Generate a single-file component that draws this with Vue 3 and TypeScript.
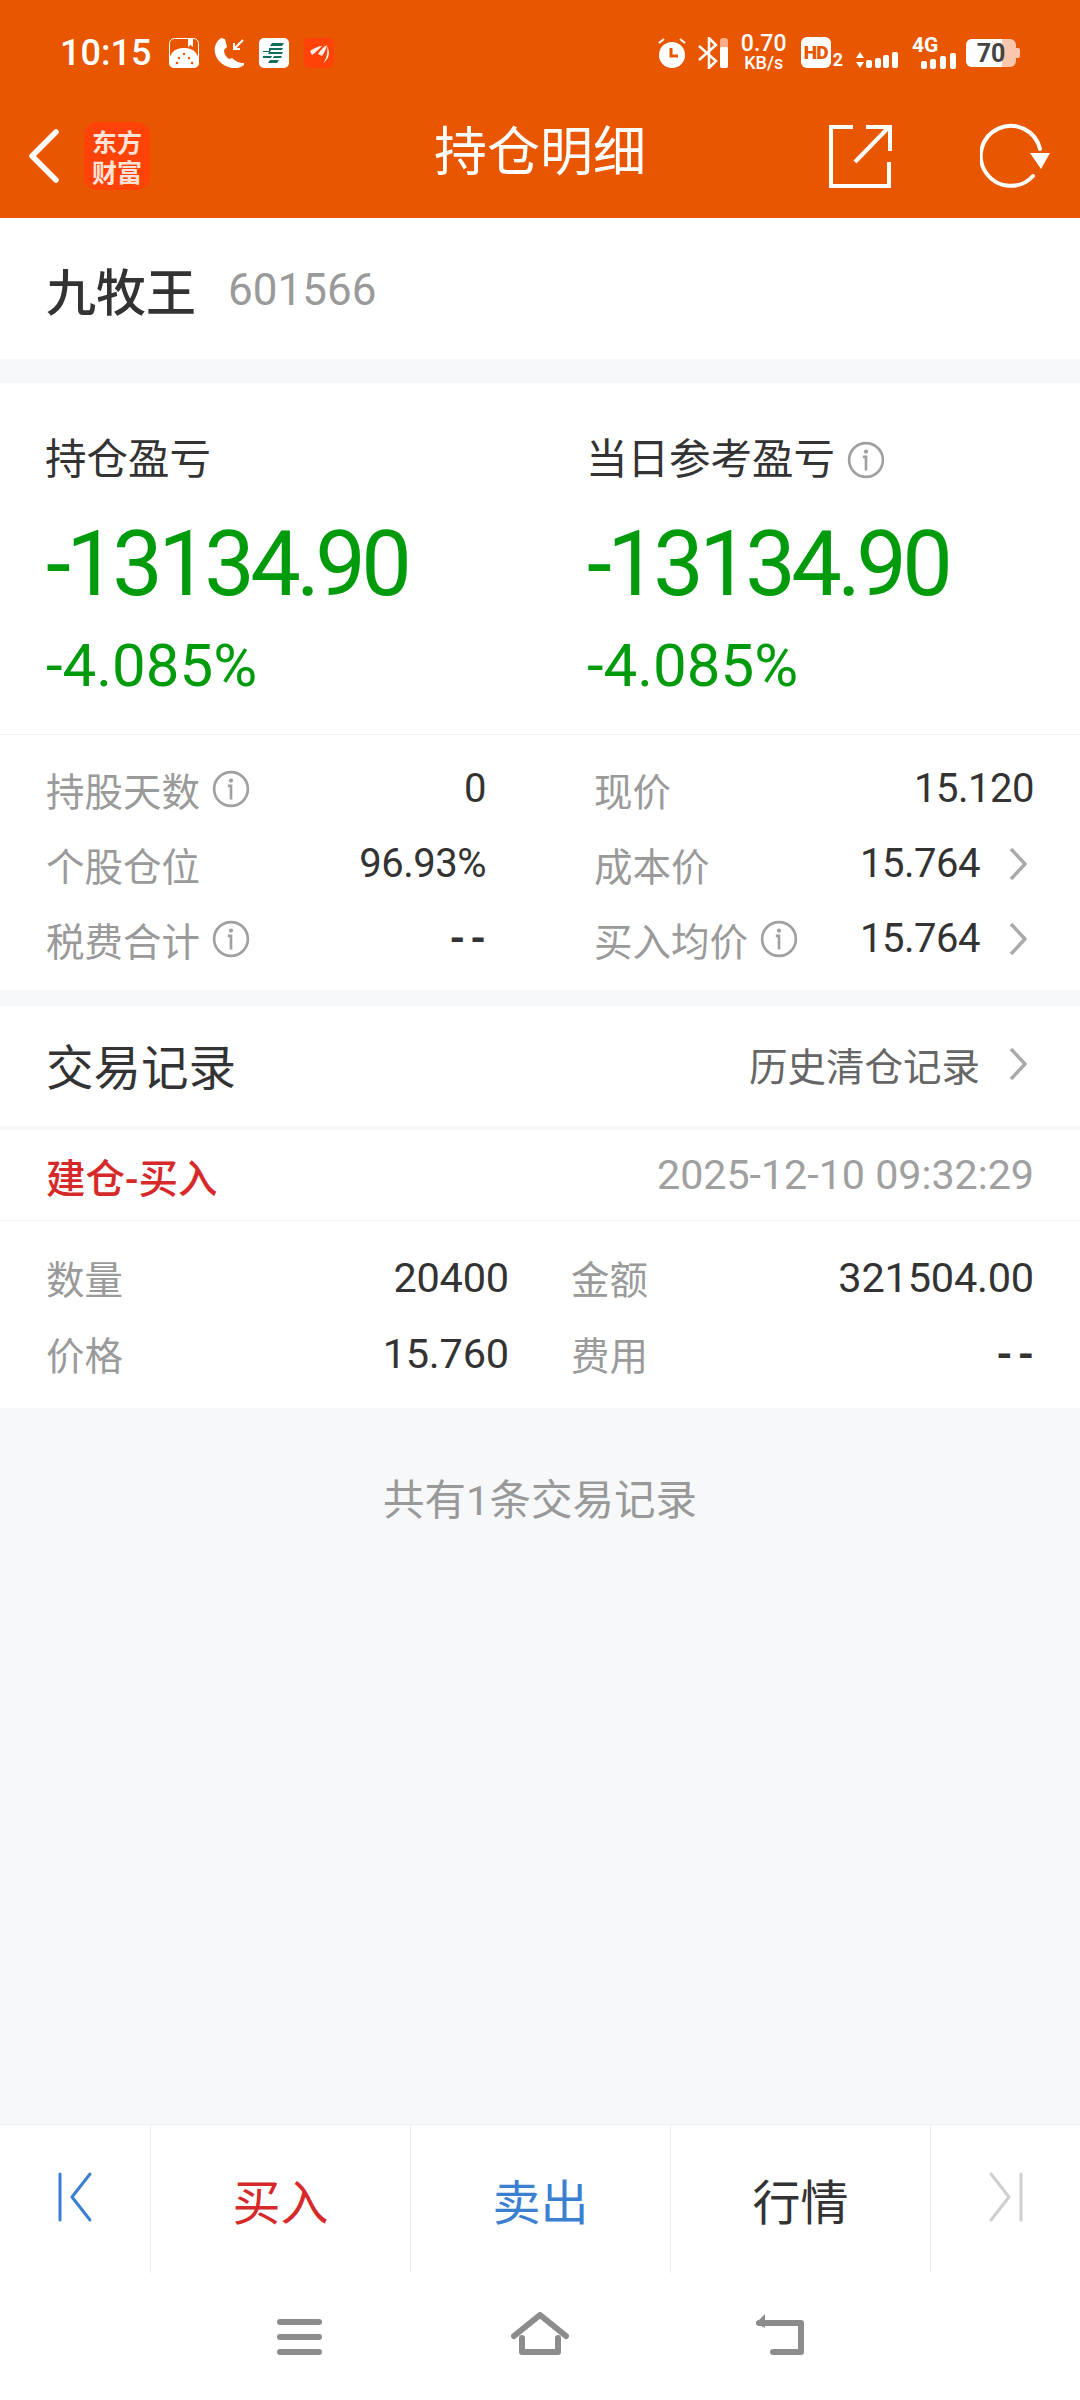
<template>
  <div class="page">
    <header class="top">
      <div class="status">
        <span class="time">10:15</span>
        <svg class="ic18" viewBox="0 0 30 30"><rect x=".5" y=".5" width="29" height="29" rx="5" fill="none" stroke="#fff" stroke-width="1" /><path d="M0 22C2 12 9 10 15 10s13 2 15 12v3a5 5 0 0 1-5 5H5a5 5 0 0 1-5-5Z" fill="#fff" /><path d="M19 0h5v9l-2.500-2-2.500 2Z" fill="#fff" /><circle cx="8" cy="25" r="1.300" fill="#e85600" /><circle cx="10" cy="20" r="1.200" fill="#e85600" /><circle cx="15" cy="16" r="1.200" fill="#e85600" /><circle cx="20" cy="20" r="1.200" fill="#e85600" /><circle cx="23" cy="25" r="1.300" fill="#e85600" /></svg>
        <svg class="ic18" viewBox="0 0 30 30"><path d="M7 0C0 5-2 14 5 23c6 7 18 10 25 4v-2c-5 0-9-2-12-5l-3 1c-3-2-5-5-5-9l3-3L11 1Z" fill="#fff" /><path d="M29 2 20 11M20 5v6h6" fill="none" stroke="#fff" stroke-width="2" /></svg>
        <svg class="ic18" viewBox="0 0 30 30"><rect width="30" height="30" rx="5" fill="#fff" /><path d="M13 5h12l-2 3H11ZM10 10h14l-1 2H12l-1 2h13l-1 2H9l1-2H4v-1h6ZM4 18h9l-1 2H4ZM15 18h8l-1 2h-8ZM11 22h9l-2 3H9Z" fill="#11705a" /></svg>
        <svg class="ic18" viewBox="0 0 30 30"><rect width="30" height="30" rx="5" fill="#ff4208" /><path d="M6 13c4-3 9-5 12-5-3 3-7 7-10 9ZM14 16c2-3 5-7 9-9-1 4-3 9-5 11ZM19 25c4-4 5-12 4-17 3 5 3 13-4 17Z" fill="#fff" opacity=".92" /></svg>
        <span class="spacer"></span>
        <svg class="sb alarm" viewBox="0 0 28 30"><path d="M1 5 6 1M27 5l-5-4" stroke="#fff" stroke-width="2" /><circle cx="14" cy="17" r="13" fill="#fff" /><path d="M13 10v8h7" fill="none" stroke="#e85600" stroke-width="3" /></svg>
        <svg class="sb bt" viewBox="0 0 32 32"><path d="M2 9l17 15-7 7V1l7 7L2 23" fill="none" stroke="#fff" stroke-width="2.500" /><rect x="23" y="1" width="8" height="30" rx="3" fill="#f9ad8a" /><rect x="23" y="10" width="8" height="21" rx="2" fill="#fff" /></svg>
        <div class="speed"><span>0.70</span><span class="unit">KB/s</span></div>
        <div class="hd"><span class="hdbox">HD</span><span class="two">2</span></div>
        <svg class="signal" viewBox="0 0 43 16"><path d="M5 0l4 6H1ZM5 16l4-6H1Z" fill="#fff" /><rect x="11" y="8" width="6" height="8" rx="2" fill="#fff" /><rect x="20" y="6" width="6" height="10" rx="2" fill="#fff" /><rect x="28" y="3" width="6" height="13" rx="2" fill="#fff" /><rect x="37" y="0" width="6" height="16" rx="2" fill="#fff" /></svg>
        <div class="g4"><span>4G</span><svg viewBox="0 0 35 16"><rect x="0" y="8" width="6" height="8" rx="2" fill="#fff" /><rect x="9" y="6" width="6" height="10" rx="2" fill="#fff" /><rect x="19" y="3" width="6" height="13" rx="2" fill="#fff" /><rect x="29" y="0" width="6" height="16" rx="2" fill="#fff" /></svg></div>
        <div class="battery"><span class="fill"></span><span class="pct">70</span><i></i></div>
      </div>
      <div class="bar">
        <div class="bar-left">
          <svg class="back" viewBox="0 0 34 56"><path d="M30 4 6 28l24 24" fill="none" stroke="#fff" stroke-width="5.500" stroke-linecap="round" stroke-linejoin="round" /></svg>
          <div class="logo"><span>东方</span><span>财富</span></div>
        </div>
        <h1 class="title">持仓明细</h1>
        <div class="bar-right">
          <svg class="share" viewBox="0 0 64 64"><path d="M25 3H3v59h58V38M38 3h24v24M60 4 27 38" fill="none" stroke="#fff" stroke-width="4" /></svg>
          <svg class="refresh" viewBox="0 0 70 66"><path d="M53 53A30 30 0 1 1 60 26" fill="none" stroke="#fff" stroke-width="4" stroke-linecap="round" /><path d="M50 30h20l-9 16Z" fill="#fff" /></svg>
        </div>
      </div>
    </header>

    <div class="stock"><strong>九牧王</strong><span>601566</span></div>

    <section class="summary">
      <div class="pl-grid">
        <div v-for="p in profit" :key="p.label" class="pl">
          <div class="pl-label">{{ p.label }}<svg v-if="p.info" class="info" viewBox="0 0 36 36"><use href="#info-mark" /></svg></div>
          <div class="pl-value">{{ p.value }}</div>
          <div class="pl-rate">{{ p.rate }}</div>
        </div>
      </div>
      <div class="stats">
        <div class="stat-col left">
          <div v-for="s in leftStats" :key="s.label" class="stat">
            <span class="k">{{ s.label }}<svg v-if="s.info" class="info" viewBox="0 0 36 36"><use href="#info-mark" /></svg></span>
            <span class="v" :class="{ dash: s.value === '--' }">{{ s.value }}</span>
          </div>
        </div>
        <div class="stat-col right">
          <div v-for="s in rightStats" :key="s.label" class="stat">
            <span class="k">{{ s.label }}<svg v-if="s.info" class="info" viewBox="0 0 36 36"><use href="#info-mark" /></svg></span>
            <span class="v">{{ s.value }}<svg v-if="s.arrow" class="chev" viewBox="0 0 20 34"><path d="M3 2l14 15L3 32" fill="none" stroke="#aaa" stroke-width="3.500" stroke-linejoin="round" /></svg></span>
          </div>
        </div>
      </div>
    </section>

    <section class="records">
      <div class="rec-head">
        <h2>交易记录</h2>
        <span class="history">历史清仓记录<svg class="chev" viewBox="0 0 20 34"><path d="M3 2l14 15L3 32" fill="none" stroke="#aaa" stroke-width="3.500" stroke-linejoin="round" /></svg></span>
      </div>
      <div class="rec-title"><span class="kind">建仓-买入</span><span class="when">2025-12-10 09:32:29</span></div>
      <div class="rec-body">
        <div v-for="r in recRows" :key="r[0]" class="rec-row">
          <span class="k">{{ r[0] }}</span><span class="v num">{{ r[1] }}</span>
          <span class="k c2">{{ r[2] }}</span><span class="v num" :class="{ dash: r[3] === '--' }">{{ r[3] }}</span>
        </div>
      </div>
    </section>

    <main class="rest">共有1条交易记录</main>

    <nav class="actions">
      <div class="act edge first-act"><svg class="skip" viewBox="0 0 36 52"><path d="M3 3v46M33 3 15 26l18 23" fill="none" stroke="#3b80d0" stroke-width="3" stroke-linecap="round" stroke-linejoin="round" /></svg></div>
      <div class="act buy">买入</div>
      <div class="act sell">卖出</div>
      <div class="act market">行情</div>
      <div class="act edge"><svg class="skip" viewBox="0 0 36 52"><path d="M33 3v46M3 3l18 23L3 49" fill="none" stroke="#cfcfcf" stroke-width="3" stroke-linecap="round" stroke-linejoin="round" /></svg></div>
    </nav>

    <footer class="nav">
      <svg viewBox="0 0 45 36" class="n1"><path d="M3 3h39M3 18h39M3 33h39" stroke="#8c8c8c" stroke-width="6" stroke-linecap="round" /></svg>
      <svg viewBox="0 0 58 43" class="n2"><path d="M3 24 29 3l26 21M11 26v14h36V26" fill="none" stroke="#8c8c8c" stroke-width="6" stroke-linejoin="round" stroke-linecap="round" /></svg>
      <svg viewBox="0 0 49 42" class="n3"><path d="M4 10h42v29H18" fill="none" stroke="#8c8c8c" stroke-width="6" stroke-linecap="round" stroke-linejoin="round" /><path d="M1 10 10 1v14Z" fill="#8c8c8c" /></svg>
    </footer>

    <svg width="0" height="0" class="defs"><defs><g id="info-mark"><circle cx="18" cy="18" r="16" fill="none" stroke="#a0a0a0" stroke-width="2.500" /><circle cx="18" cy="10" r="2" fill="#a0a0a0" /><path d="M15 15h3v13" fill="none" stroke="#a0a0a0" stroke-width="2.500" /></g></defs></svg>
  </div>
</template>

<script setup lang="ts">
const profit = [
  { label: '持仓盈亏', value: '-13134.90', rate: '-4.085%', info: false },
  { label: '当日参考盈亏', value: '-13134.90', rate: '-4.085%', info: true },
]

const leftStats = [
  { label: '持股天数', value: '0', info: true },
  { label: '个股仓位', value: '96.93%', info: false },
  { label: '税费合计', value: '--', info: true },
]

const rightStats = [
  { label: '现价', value: '15.120', info: false, arrow: false },
  { label: '成本价', value: '15.764', info: false, arrow: true },
  { label: '买入均价', value: '15.764', info: true, arrow: true },
]

const recRows = [
  ['数量', '20400', '金额', '321504.00'],
  ['价格', '15.760', '费用', '--'],
]
</script>

<style>
html, body { margin: 0; background: #f7f8fa; }
</style>

<style scoped>
.page {
  width: 1080px;
  height: 2400px;
  display: flex;
  flex-direction: column;
  overflow: hidden;
  background: #f7f8fa;
  color: #333;
  font-family: Roboto, "Noto Sans CJK SC", sans-serif;
}
.defs { position: absolute; }
.top { height: 218px; background: #e85600; color: #fff; flex: none; }
.status {
  height: 100px;
  display: flex;
  align-items: center;
  padding: 5px 60px 0 60px;
  box-sizing: border-box;
}
.time { font-size: 36px; font-weight: 500; width: 109px; flex: none; }
.ic18 { width: 30px; height: 30px; margin-right: 15px; flex: none; }
.spacer { flex: 1; }
.sb { flex: none; }
.alarm { width: 28px; height: 30px; margin-right: 11px; }
.bt { width: 32px; height: 32px; margin-right: 12px; }
.speed { width: 46px; display: flex; flex-direction: column; align-items: center; font-size: 23px; line-height: 20px; font-weight: 500; margin-right: 14px; }
.speed .unit { font-size: 18px; line-height: 17px; }
.hd { display: flex; align-items: flex-end; margin-right: 12px; }
.hdbox { background: #fff; color: #e85600; width: 30px; height: 31px; border-radius: 6px; font-size: 19px; font-weight: 900; line-height: 31px; text-align: center; letter-spacing: -1px; }
.two { font-size: 18px; font-weight: 700; line-height: 16px; margin-left: 2px; }
.signal { width: 43px; height: 16px; margin: 15px 14px 0 0; flex: none; }
.g4 { display: flex; flex-direction: column; align-items: flex-start; width: 44px; margin-right: 10px; font-size: 21px; font-weight: 700; line-height: 16px; }
.g4 svg { width: 35px; height: 16px; margin-left: 9px; }
.battery { position: relative; width: 50px; height: 28px; border-radius: 6px; background: #f9c6ae; margin-right: 4px; flex: none; }
.battery .fill { position: absolute; left: 0; top: 0; bottom: 0; width: 36px; background: #fff; border-radius: 6px 0 0 6px; }
.battery .pct { position: absolute; inset: 0; text-align: center; color: #444; font-size: 25px; font-weight: 700; line-height: 29px; }
.battery i { position: absolute; right: -4px; top: 9px; width: 4px; height: 10px; background: #f9c6ae; border-radius: 0 2px 2px 0; }
.bar {
  height: 118px;
  padding-bottom: 6px;
  box-sizing: border-box;
  position: relative;
  display: flex;
  align-items: center;
  justify-content: space-between;
}
.bar-left { display: flex; align-items: center; padding-left: 26px; }
.back { width: 34px; height: 56px; margin-right: 24px; }
.logo {
  width: 66px;
  height: 68px;
  border-radius: 14px;
  background: #ff4208;
  display: flex;
  flex-direction: column;
  align-items: center;
  justify-content: center;
  font-size: 25px;
  line-height: 30px;
  font-weight: 700;
  font-family: "Noto Sans CJK SC", sans-serif;
  color: #ffe3d6;
}
.title {
  position: absolute;
  left: 50%;
  top: 0;
  transform: translateX(-50%);
  margin: 0;
  white-space: nowrap;
  font-size: 53px;
  font-weight: 400;
  line-height: 106px;
}
.bar-right { display: flex; align-items: center; padding-right: 30px; gap: 90px; }
.share { width: 64px; height: 64px; margin-right: -2px; }
.refresh { width: 70px; height: 66px; }

.stock {
  height: 141px;
  background: #fff;
  display: flex;
  align-items: center;
  padding-left: 46px;
  flex: none;
}
.stock strong { font-size: 50px; font-weight: 500; color: #333; }
.stock span { font-size: 44px; color: #9a9a9a; margin-left: 32px; padding-top: 2px; }

.summary { margin-top: 24px; background: #fff; flex: none; height: 607px; }
.pl-grid { display: grid; grid-template-columns: 541px 1fr; padding-left: 46px; height: 352px; border-bottom: 1px solid #f2f3f5; box-sizing: border-box; }
.pl { padding-top: 51px; }
.pl-label { font-size: 41.500px; line-height: 52px; display: flex; align-items: center; color: #333; margin-left: -1px; }
.pl-value { font-size: 90px; line-height: 100px; margin-top: 29px; color: #009b0c; letter-spacing: -4.600px; }
.pl-rate { font-size: 60px; line-height: 66px; margin-top: 18px; color: #009b0c; }
.info { width: 38px; height: 38px; margin-left: 12px; flex: none; }
.stats { display: flex; padding: 16px 46px 0; }
.stat-col { display: flex; flex-direction: column; }
.stat-col.left { width: 440px; margin-right: 108px; }
.stat-col.right { flex: 1; }
.stat { height: 75px; display: flex; align-items: center; justify-content: space-between; }
.k { font-size: 38.500px; color: #9a9a9a; display: flex; align-items: center; white-space: nowrap; }
.v { font-size: 40px; color: #333; display: flex; align-items: center; justify-content: flex-end; letter-spacing: -.5px; }
.v.dash { font-weight: 700; letter-spacing: 5px; margin-right: -5px; }
.chev { width: 20px; height: 34px; margin-left: 28px; margin-right: 6px; flex: none; }

.records { margin-top: 16px; background: #fff; flex: none; height: 402px; }
.rec-head { height: 124px; display: flex; align-items: center; justify-content: space-between; padding: 0 46px 4px; border-bottom: 4px solid #f7f8fa; box-sizing: border-box; }
.rec-head h2 { margin: 0; font-size: 47.500px; font-weight: 400; color: #333; }
.history { font-size: 38.500px; color: #666; display: flex; align-items: center; }
.rec-title { height: 91px; display: flex; align-items: center; justify-content: space-between; padding: 0 46px; border-bottom: 1px solid #f2f3f5; box-sizing: border-box; }
.kind { font-size: 39.500px; color: #d62a2a; font-weight: 500; }
.when { font-size: 41.200px; color: #a0a0a0; }
.rec-body { padding: 18px 46px 0; }
.rec-row { height: 76px; display: grid; grid-template-columns: 110px 353px 142px 1fr; align-items: center; }
.num { font-size: 41.500px; letter-spacing: -.2px; }
.c2 { margin-left: 62px; }

.rest { flex: 1; text-align: center; padding-top: 66px; font-size: 41.500px; line-height: 54px; color: #999; }

.actions { height: 149px; flex: none; display: flex; background: #fff; border-top: 1px solid #eceef0; box-sizing: border-box; }
.act { width: 260px; border-left: 1px solid #eceef0; box-sizing: border-box; display: flex; align-items: center; justify-content: center; font-size: 48px; }
.edge { width: 150px; padding-bottom: 5px; }
.first-act { border-left: 0; }
.skip { width: 36px; height: 52px; }
.buy { color: #d62a2a; }
.sell { color: #3b80d0; }
.market { color: #333; }
.nav { height: 127px; flex: none; background: #fff; display: flex; align-items: flex-end; justify-content: center; gap: 187px; padding-bottom: 45px; box-sizing: border-box; }
.n1 { width: 45px; height: 36px; }
.n2 { width: 58px; height: 43px; margin-left: 2px; }
.n3 { width: 49px; height: 42px; margin-left: -1px; }
</style>
